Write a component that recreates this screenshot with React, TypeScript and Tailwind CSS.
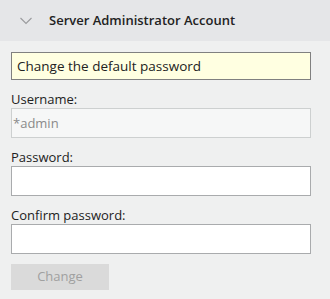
import React from 'react';

const font = { fontFamily: '"Open Sans", "Noto Sans", sans-serif' };

const Field = ({ label, value, disabled }: { label: string; value?: string; disabled?: boolean }) => (
  <div className="flex flex-col">
    <label className="h-[18px] text-[13px] leading-[18px] text-[#222]">{label}</label>
    <input
      readOnly
      value={value ?? ''}
      type={disabled ? 'text' : 'password'}
      className={`h-[30px] w-[300px] border px-[1px] text-[13px] outline-none ${
        disabled ? 'border-[#cdd0d0] bg-[#f6f7f7] text-[#8a8a8a]' : 'border-[#a9abad] bg-white text-[#222]'
      }`}
    />
  </div>
);

export default function App() {
  return (
    <div className="h-[299px] w-[330px] bg-[#eff0f0]" style={font}>
      <div className="flex h-[41px] items-center bg-[#e5e6e8]">
        <svg className="ml-[20px] h-[8px] w-[12px]" viewBox="0 0 12 8" fill="none">
          <path d="M0.5 1 L6 6.5 L11.5 1" stroke="#9a9b9d" strokeWidth="1.1" />
        </svg>
        <span className="ml-[17px] text-[13px] font-semibold text-[#222]">Server Administrator Account</span>
      </div>
      <div className="flex flex-col gap-[10px] px-[11px] pt-[11px]">
        <div className="flex h-[28px] w-[300px] items-center border border-[#808080] bg-[#ffffe1] pl-[5px] text-[13.5px] text-[#222]">
          Change the default password
        </div>
        <Field label="Username:" value="*admin" disabled />
        <Field label="Password:" />
        <Field label="Confirm password:" />
        <button className="h-[26px] w-[98px] bg-[#dadada] text-[13px] text-[#a0a0a0]">Change</button>
      </div>
    </div>
  );
}
